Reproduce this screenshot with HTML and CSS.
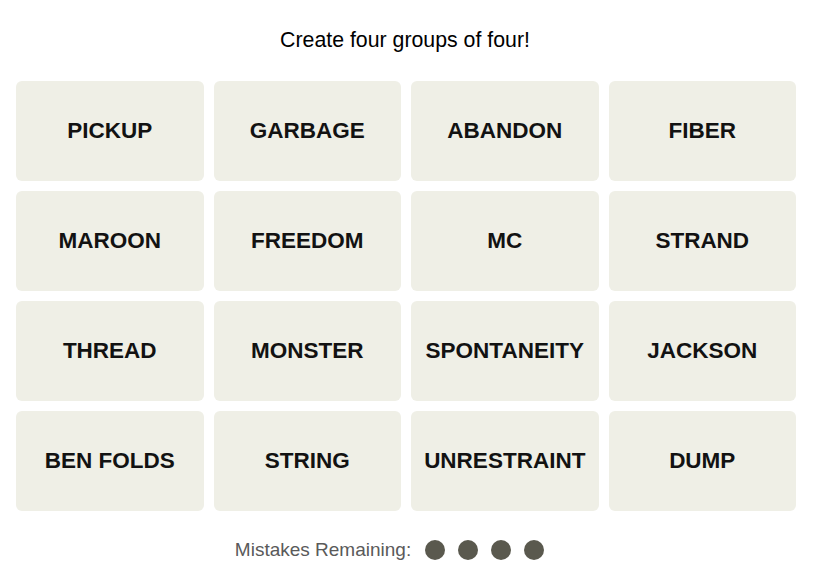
FILE: index.html
```html
<!DOCTYPE html>
<html lang="en">
  <head>
    <meta charset="UTF-8" />
    <title>Connections</title>
    <link rel="stylesheet" href="styles.css">
  </head>
  <body>
    <div class="game">
      <h2 class="prompt">Create four groups of four!</h2>

      <div class="board">
        <button class="tile">PICKUP</button>
        <button class="tile">GARBAGE</button>
        <button class="tile">ABANDON</button>
        <button class="tile">FIBER</button>
        <button class="tile">MAROON</button>
        <button class="tile">FREEDOM</button>
        <button class="tile">MC</button>
        <button class="tile">STRAND</button>
        <button class="tile">THREAD</button>
        <button class="tile">MONSTER</button>
        <button class="tile">SPONTANEITY</button>
        <button class="tile">JACKSON</button>
        <button class="tile">BEN FOLDS</button>
        <button class="tile">STRING</button>
        <button class="tile">UNRESTRAINT</button>
        <button class="tile">DUMP</button>
      </div>

      <div class="mistakes">
        <span class="mistakes-label">Mistakes Remaining:</span>
        <div class="dots">
          <span class="dot"></span>
          <span class="dot"></span>
          <span class="dot"></span>
          <span class="dot"></span>
        </div>
      </div>
    </div>
  </body>
</html>
```

FILE: styles.css
```css
body {
  margin: 0;
  background: #fff;
  color: #000;
  font-family: "Liberation Sans", Arial, sans-serif;
}

.game {
  padding: 0 16px;
}

.prompt {
  margin: 28px 0 29px;
  padding-right: 13px;
  font-size: 21.3px;
  line-height: 24px;
  font-weight: normal;
  text-align: center;
}

.board {
  display: grid;
  grid-template-columns: repeat(4, 1fr);
  grid-auto-rows: 100px;
  gap: 10px;
  width: 780px;
}

.tile {
  background: #efefe6;
  color: #121212;
  border: none;
  border-radius: 6px;
  font-family: "Liberation Sans", Arial, sans-serif;
  font-size: 22.5px;
  font-weight: bold;
  padding: 0;
  cursor: pointer;
}

.mistakes {
  display: flex;
  justify-content: center;
  align-items: center;
  gap: 14px;
  margin-top: 29px;
  height: 20px;
}

.mistakes-label {
  font-size: 19px;
  color: #5a5a5a;
}

.dots {
  display: flex;
  gap: 13px;
  margin-right: 44px;
}

.dot {
  width: 20px;
  height: 20px;
  border-radius: 50%;
  background: #5a594e;
}
```
